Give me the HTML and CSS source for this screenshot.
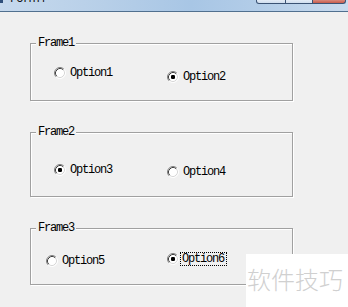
FILE: index.html
```html
<!DOCTYPE html>
<html>
<head>
<meta charset="utf-8">
<link rel="stylesheet" href="styles.css">
</head>
<body>
<div class="window">
  <div class="titlebar">
    <span class="ticon"></span>
    <span class="title">Form1</span>
    <div class="caption-btns">
      <span class="cbtn min"></span>
      <span class="cbtn max"></span>
      <span class="cbtn close"></span>
    </div>
  </div>
  <div class="client">
    <div class="frame f1">
      <div class="legend">Frame1</div>
      <div class="opts">
        <label class="opt o1"><svg class="radio" width="12" height="12" viewBox="0 0 12 12"><circle cx="6" cy="6" r="5" fill="#fff"/><path d="M2.11 9.89A5.5 5.5 0 0 1 9.89 2.11" stroke="#808080" fill="none"/><path d="M9.89 2.11A5.5 5.5 0 0 1 2.11 9.89" stroke="#fff" fill="none"/><path d="M2.82 9.18A4.5 4.5 0 0 1 9.18 2.82" stroke="#404040" fill="none"/><path d="M9.18 2.82A4.5 4.5 0 0 1 2.82 9.18" stroke="#d8d8d8" fill="none"/></svg><span>Option1</span></label>
        <label class="opt o2"><svg class="radio" width="12" height="12" viewBox="0 0 12 12"><circle cx="6" cy="6" r="5" fill="#fff"/><path d="M2.11 9.89A5.5 5.5 0 0 1 9.89 2.11" stroke="#808080" fill="none"/><path d="M9.89 2.11A5.5 5.5 0 0 1 2.11 9.89" stroke="#fff" fill="none"/><path d="M2.82 9.18A4.5 4.5 0 0 1 9.18 2.82" stroke="#404040" fill="none"/><path d="M9.18 2.82A4.5 4.5 0 0 1 2.82 9.18" stroke="#d8d8d8" fill="none"/><rect x="4" y="4" width="4" height="4" rx="1.2" fill="#000"/></svg><span>Option2</span></label>
      </div>
    </div>
    <div class="frame f2">
      <div class="legend">Frame2</div>
      <div class="opts">
        <label class="opt o3"><svg class="radio" width="12" height="12" viewBox="0 0 12 12"><circle cx="6" cy="6" r="5" fill="#fff"/><path d="M2.11 9.89A5.5 5.5 0 0 1 9.89 2.11" stroke="#808080" fill="none"/><path d="M9.89 2.11A5.5 5.5 0 0 1 2.11 9.89" stroke="#fff" fill="none"/><path d="M2.82 9.18A4.5 4.5 0 0 1 9.18 2.82" stroke="#404040" fill="none"/><path d="M9.18 2.82A4.5 4.5 0 0 1 2.82 9.18" stroke="#d8d8d8" fill="none"/><rect x="4" y="4" width="4" height="4" rx="1.2" fill="#000"/></svg><span>Option3</span></label>
        <label class="opt o4"><svg class="radio" width="12" height="12" viewBox="0 0 12 12"><circle cx="6" cy="6" r="5" fill="#fff"/><path d="M2.11 9.89A5.5 5.5 0 0 1 9.89 2.11" stroke="#808080" fill="none"/><path d="M9.89 2.11A5.5 5.5 0 0 1 2.11 9.89" stroke="#fff" fill="none"/><path d="M2.82 9.18A4.5 4.5 0 0 1 9.18 2.82" stroke="#404040" fill="none"/><path d="M9.18 2.82A4.5 4.5 0 0 1 2.82 9.18" stroke="#d8d8d8" fill="none"/></svg><span>Option4</span></label>
      </div>
    </div>
    <div class="frame f3">
      <div class="legend">Frame3</div>
      <div class="opts">
        <label class="opt o5"><svg class="radio" width="12" height="12" viewBox="0 0 12 12"><circle cx="6" cy="6" r="5" fill="#fff"/><path d="M2.11 9.89A5.5 5.5 0 0 1 9.89 2.11" stroke="#808080" fill="none"/><path d="M9.89 2.11A5.5 5.5 0 0 1 2.11 9.89" stroke="#fff" fill="none"/><path d="M2.82 9.18A4.5 4.5 0 0 1 9.18 2.82" stroke="#404040" fill="none"/><path d="M9.18 2.82A4.5 4.5 0 0 1 2.82 9.18" stroke="#d8d8d8" fill="none"/></svg><span>Option5</span></label>
        <label class="opt o6"><svg class="radio" width="12" height="12" viewBox="0 0 12 12"><circle cx="6" cy="6" r="5" fill="#fff"/><path d="M2.11 9.89A5.5 5.5 0 0 1 9.89 2.11" stroke="#808080" fill="none"/><path d="M9.89 2.11A5.5 5.5 0 0 1 2.11 9.89" stroke="#fff" fill="none"/><path d="M2.82 9.18A4.5 4.5 0 0 1 9.18 2.82" stroke="#404040" fill="none"/><path d="M9.18 2.82A4.5 4.5 0 0 1 2.82 9.18" stroke="#d8d8d8" fill="none"/><rect x="4" y="4" width="4" height="4" rx="1.2" fill="#000"/></svg><span class="focus">Option6</span></label>
      </div>
    </div>
  </div>
  <div class="watermark">软件技巧</div>
</div>
</body>
</html>
```

FILE: styles.css
```css
html, body {
  margin: 0;
  padding: 0;
}
body {
  background: #f0f0f0;
  width: 348px;
  height: 307px;
  overflow: hidden;
  font-family: "Liberation Mono", "DejaVu Sans Mono", monospace;
  font-size: 12px;
  letter-spacing: -1.2px;
  color: #000;
}
.window {
  position: relative;
  width: 348px;
  height: 307px;
}
.titlebar {
  height: 11px;
  border-bottom: 1px solid #51708f;
  background: linear-gradient(90deg, #c6d9ed 0%, #b7cfe8 30%, #a8c6e5 55%, #b3cde8 75%, #c9dbee 100%);
  display: flex;
  align-items: flex-start;
  overflow: hidden;
  letter-spacing: 0;
}
.ticon {
  width: 3px;
  height: 3px;
  background: #2f4f7a;
}
.title {
  margin: -8px 0 0 7px;
  font-family: "Noto Sans", sans-serif;
  font-size: 12px;
  line-height: 12px;
  color: #111;
}
.caption-btns {
  margin-left: auto;
  margin-right: 2px;
  display: flex;
  height: 4px;
}
.cbtn {
  display: block;
  height: 3px;
  border: 1px solid #3b5374;
  border-top: none;
  background: linear-gradient(#e4ecf6, #d0deee);
}
.cbtn.min {
  width: 28px;
  border-bottom-left-radius: 3px;
}
.cbtn.max {
  width: 26px;
  border-left: none;
}
.cbtn.close {
  width: 32px;
  border-left: none;
  background: linear-gradient(#d9887b, #c75c4c);
  border-bottom-right-radius: 3px;
}
.client {
  padding: 31px 0 0 30px;
  display: flex;
  flex-direction: column;
  gap: 31px;
}
.frame {
  width: 263px;
  box-sizing: border-box;
  border: 1px solid #a0a0a0;
  box-shadow: inset 1px 1px 0 #fff, 1px 1px 0 #fff;
}
.f1 { height: 58px; }
.f2 { height: 65px; }
.f3 { height: 57px; }
.legend {
  margin: -6px 0 0 5px;
  padding: 0 2px;
  width: max-content;
  height: 10px;
  line-height: 10px;
  background: #f0f0f0;
}
.opts {
  display: grid;
  grid-template-columns: 113px auto;
  align-items: start;
  padding-left: 23px;
}
.f3 .opts {
  padding-left: 15px;
  grid-template-columns: 121px auto;
}
.opt {
  display: flex;
  align-items: center;
  gap: 4px;
  height: 12px;
  line-height: 12px;
}
.radio {
  display: block;
  flex: none;
}
.o1 { margin-top: 19px; }
.o2 { margin-top: 23px; }
.o3 { margin-top: 27px; }
.o4 { margin-top: 29px; }
.o5 { margin-top: 22px; }
.o6 { margin-top: 20px; }
.opt .focus {
  margin-left: -2px;
  padding: 0 2px 0 1px;
  outline: 1px dotted #000;
  outline-offset: 0;
}
.watermark {
  position: absolute;
  left: 246px;
  top: 254px;
  width: 102px;
  height: 53px;
  box-sizing: border-box;
  padding: 13px 0 0 1px;
  background: #fff;
  color: #d0d0d0;
  font-family: "Noto Sans CJK SC", sans-serif;
  font-weight: 300;
  font-size: 24px;
  line-height: 24px;
  letter-spacing: 0;
  white-space: nowrap;
}
```
